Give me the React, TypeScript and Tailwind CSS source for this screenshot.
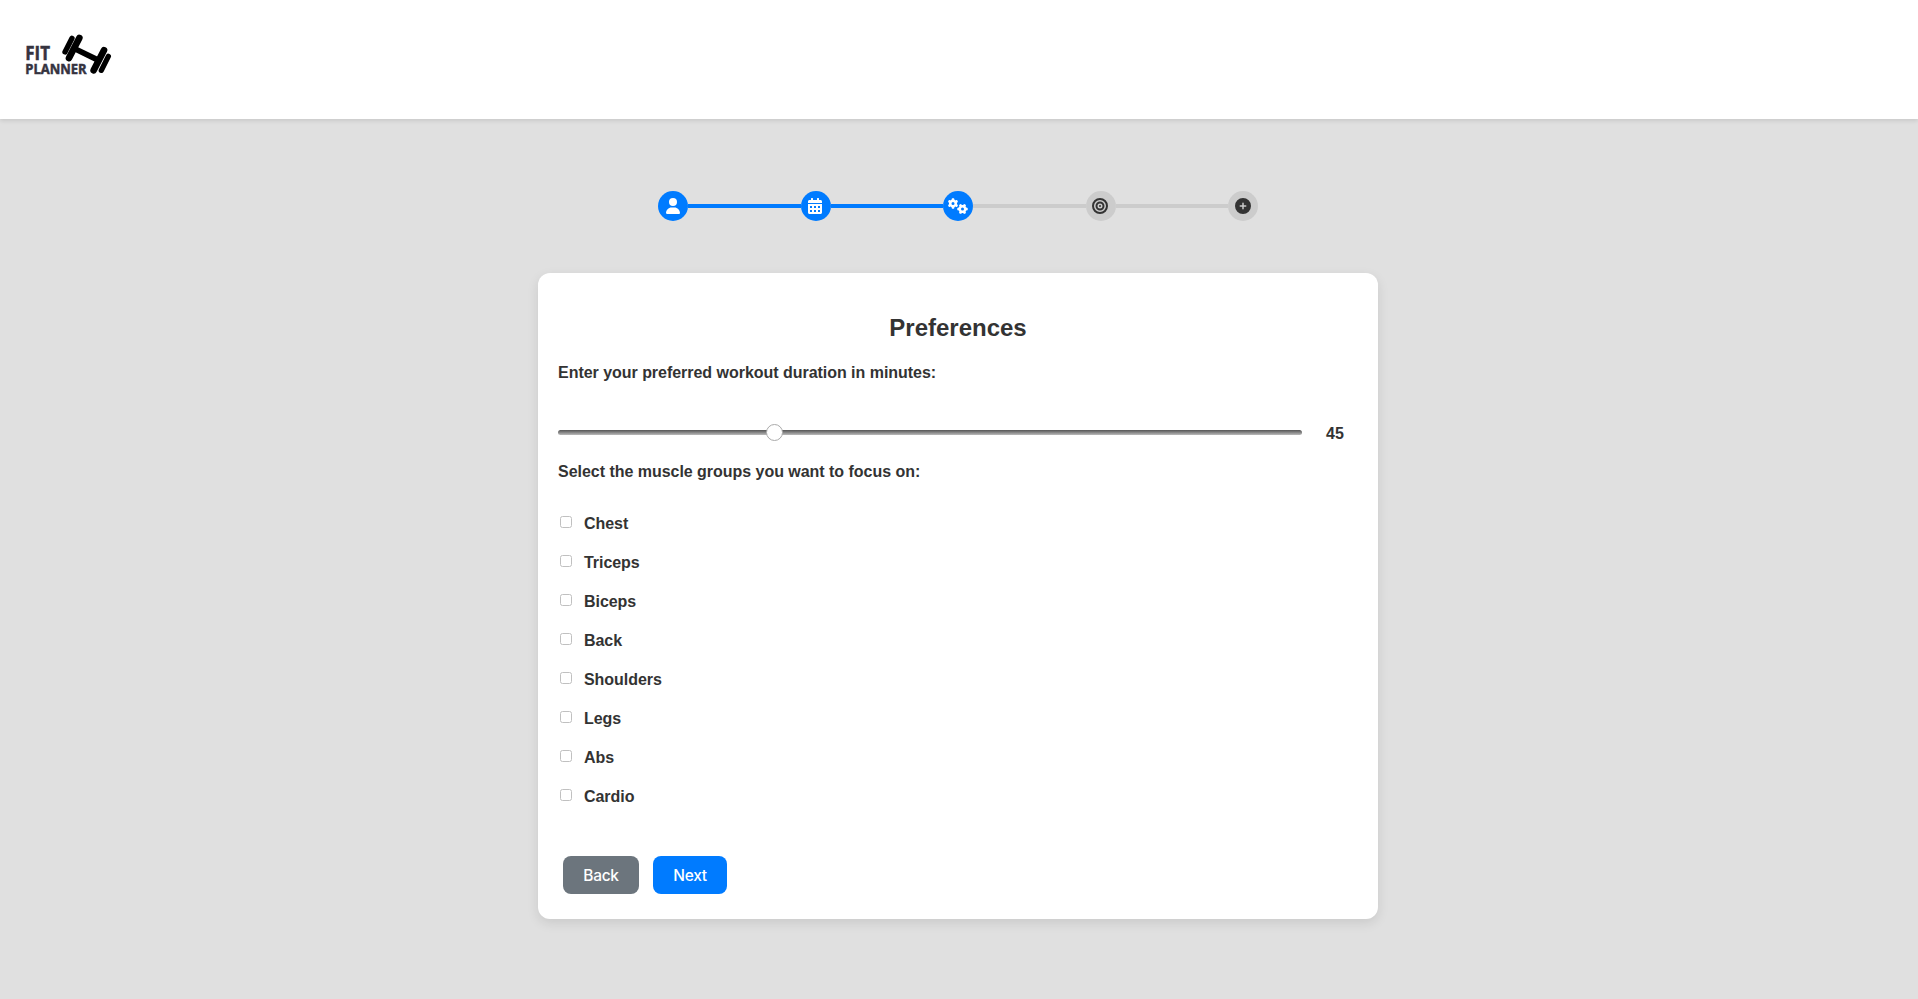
import React, { useState } from 'react';
import { FaUser, FaBullseye, FaCirclePlus, FaGears } from 'react-icons/fa6';
import { FaCalendarAlt } from 'react-icons/fa';

const steps = [
  { Icon: FaUser, size: 'size-4' },
  { Icon: FaCalendarAlt, size: 'size-4 mr-px' },
  { Icon: FaGears, size: 'h-4 w-5' },
  { Icon: FaBullseye, size: 'size-4 mr-px' },
  { Icon: FaCirclePlus, size: 'size-4' },
];
const current = 2;
const muscles = ['Chest', 'Triceps', 'Biceps', 'Back', 'Shoulders', 'Legs', 'Abs', 'Cardio'];

function Logo() {
  return (
    <svg viewBox="0 0 390 297" className="h-[99px] w-[130px]" aria-label="Fit Planner">
      <g fill="#35333f" stroke="#35333f" strokeWidth="1.5" fontFamily='"Open Sans", "Noto Sans", sans-serif' fontWeight="700">
        <text x="76" y="120" fontSize="56" textLength="74" lengthAdjust="spacingAndGlyphs">FIT</text>
        <text x="76" y="163" fontSize="41" textLength="184" lengthAdjust="spacingAndGlyphs">PLANNER</text>
      </g>
      <g stroke="#000" strokeLinecap="round" fill="none">
        <path d="M216 55 195 96M325 109 304 151" strokeWidth="16" />
        <path d="M238 54 207 114M312 91 281 151" strokeWidth="20" />
        <path d="M226 87 296 121" strokeWidth="17" />
      </g>
    </svg>
  );
}

function Stepper() {
  return (
    <div className="flex h-[30px] w-[600px] items-center">
      {steps.map(({ Icon, size }, i) => (
        <React.Fragment key={i}>
          {i > 0 && <div className={`h-1 flex-1 ${i <= current ? 'bg-[#007bff]' : 'bg-[#ccc]'}`} />}
          <div
            className={`flex size-[30px] items-center justify-center rounded-full ${
              i <= current ? 'bg-[#007bff] text-white' : 'bg-[#ccc] text-[#333]'
            }`}
          >
            <Icon className={size} />
          </div>
        </React.Fragment>
      ))}
    </div>
  );
}

export default function App() {
  const [duration, setDuration] = useState(45);
  return (
    <div className="flex h-[999px] flex-col items-center bg-[#e0e0e0] font-['Liberation_Sans',sans-serif] text-base text-[#333]">
      <header className="flex h-[119px] w-full shrink-0 items-start bg-white pt-5 shadow-[0_2px_4px_rgba(0,0,0,0.1)]">
        <Logo />
      </header>
      <main className="flex flex-col items-center pt-[72px] pr-0.5">
        <Stepper />
        <form className="mt-[52px] flex h-[646px] w-[840px] flex-col rounded-xl bg-white px-5 pt-[41px] shadow-[0_4px_12px_rgba(0,0,0,0.1)]">
          <h2 className="text-center text-2xl leading-7 font-bold">Preferences</h2>
          <label className="mt-[21px] text-base leading-5 font-bold tracking-[-0.03px]">Enter your preferred workout duration in minutes:</label>
          <div className="mt-10 flex h-[18px] items-center">
            <input
              type="range"
              min={15}
              max={120}
              value={duration}
              onChange={(e) => setDuration(Number(e.target.value))}
              className="h-[5px] w-[744px] appearance-none rounded-sm bg-linear-to-b from-[#555] to-[#bbb] [&::-webkit-slider-thumb]:size-[17px] [&::-webkit-slider-thumb]:appearance-none [&::-webkit-slider-thumb]:rounded-full [&::-webkit-slider-thumb]:border [&::-webkit-slider-thumb]:border-[#aaa] [&::-webkit-slider-thumb]:bg-white"
            />
            <span className="ml-6 pt-[3px] font-bold">{duration}</span>
          </div>
          <p className="mt-[21px] leading-5 font-bold tracking-[-0.03px]">Select the muscle groups you want to focus on:</p>
          <div className="mt-[22px] flex flex-col">
            {muscles.map((m) => (
              <label key={m} className="flex h-[39px] items-center gap-3 pl-0.5 font-bold tracking-[-0.05px]">
                <input type="checkbox" className="mb-[3px] size-3 appearance-none rounded-[2.5px] border border-[#c0c0c0] bg-white checked:bg-[#007bff]" />
                <span>{m}</span>
              </label>
            ))}
          </div>
          <div className="mt-10 ml-[5px] flex gap-3.5 font-['Inter',sans-serif] text-[15.5px] font-medium tracking-[-0.3px] text-white">
            <button type="button" className="h-[38px] w-[76px] rounded-lg bg-[#6c757d] pt-px">Back</button>
            <button type="button" className="h-[38px] w-[74px] rounded-lg bg-[#007bff] pt-px">Next</button>
          </div>
        </form>
      </main>
    </div>
  );
}
